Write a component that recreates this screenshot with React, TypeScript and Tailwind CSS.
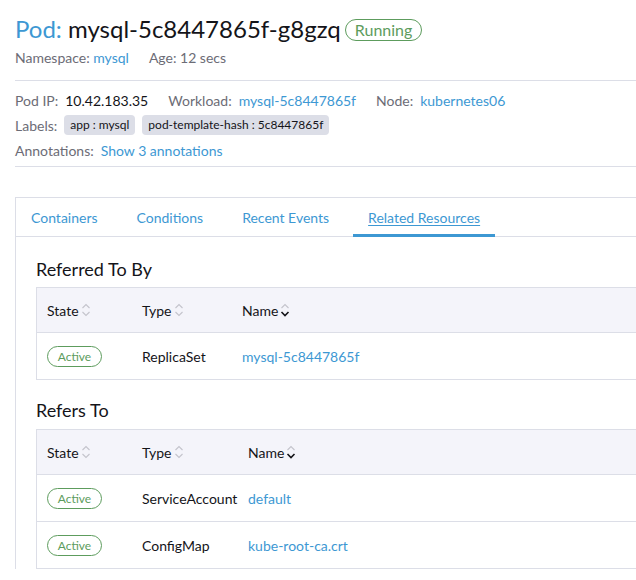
import { ReactNode } from 'react';

const SortIcon = ({ active = false }: { active?: boolean }) => (
  <svg className="ml-[2px] inline-block h-[16px] w-[10px]" viewBox="0 0 10 16" fill="none">
    <path d="M1.5 6L5 2.5L8.5 6" stroke="#c4c4cc" strokeWidth={1.1} />
    <path
      d="M1.5 10L5 13.5L8.5 10"
      stroke={active ? '#141419' : '#c4c4cc'}
      strokeWidth={active ? 1.6 : 1.1}
    />
  </svg>
);

const ActiveBadge = () => (
  <span className="inline-flex h-[21px] w-[55px] items-center justify-center rounded-full border border-[#5d9c5d] text-[12px] text-[#5d9c5d]">
    Active
  </span>
);

interface Row {
  type: string;
  name: string;
}

const ResourceTable = ({ rows, typeWidth }: { rows: Row[]; typeWidth: string }) => (
  <div className="border-y border-l border-[#dcdee7] text-[14px] text-[#141419]">
    <div className="flex h-[44px] items-center bg-[#f4f4fa] pl-[10px]">
      <div className="flex w-[95px] items-center">
        State
        <SortIcon />
      </div>
      <div className={`flex items-center ${typeWidth}`}>
        Type
        <SortIcon />
      </div>
      <div className="flex items-center">
        Name
        <SortIcon active />
      </div>
    </div>
    {rows.map((r, i) => (
      <div key={i} className="flex h-[47px] items-center border-t border-[#dcdee7] pl-[10px]">
        <div className="w-[95px]">
          <ActiveBadge />
        </div>
        <div className={typeWidth}>{r.type}</div>
        <div className="text-[#3d98d3]">{r.name}</div>
      </div>
    ))}
  </div>
);

const Field = ({ label, children }: { label: string; children: ReactNode }) => (
  <span className="mr-[20px] flex items-center">
    <span className="mr-[7px] text-[#6c6c76]">{label}</span>
    {children}
  </span>
);

const Chip = ({ children }: { children: ReactNode }) => (
  <span className="mr-[7px] flex h-[20px] items-center rounded-[4px] bg-[#dcdee7] px-[6px] text-[12px] text-[#141419]">
    {children}
  </span>
);

export default function App() {
  const tabs = ['Containers', 'Conditions', 'Recent Events', 'Related Resources'];

  return (
    <div className="h-[580px] w-[636px] overflow-hidden bg-white pl-[15px] font-['Lato',sans-serif]">
      <div className="flex items-center pt-[13px]">
        <h1 className="text-[24px] leading-[32px] text-[#141419]">
          <span className="text-[#3d98d3]">Pod:</span> mysql-5c8447865f-g8gzq
        </h1>
        <span className="ml-[4px] mt-[1px] flex h-[22px] items-center rounded-full border border-[#5d9c5d] px-[9px] text-[16px] text-[#5d9c5d]">
          Running
        </span>
      </div>
      <div className="mt-[3px] flex text-[14px] leading-[20px] text-[#6c6c76]">
        <span className="mr-[20px]">
          Namespace: <span className="text-[#3d98d3]">mysql</span>
        </span>
        <span>Age: 12 secs</span>
      </div>

      <div className="mt-[12px] border-t border-[#dcdee7]" />

      <div className="flex flex-col gap-[5px] pt-[9px] pb-[6px] text-[14px]">
        <div className="flex h-[20px] items-center">
          <Field label="Pod IP:">
            <span className="text-[#141419]">10.42.183.35</span>
          </Field>
          <Field label="Workload:">
            <span className="text-[#3d98d3]">mysql-5c8447865f</span>
          </Field>
          <Field label="Node:">
            <span className="text-[#3d98d3]">kubernetes06</span>
          </Field>
        </div>
        <div className="flex h-[20px] items-center">
          <span className="mr-[7px] text-[#6c6c76]">Labels:</span>
          <Chip>app : mysql</Chip>
          <Chip>pod-template-hash : 5c8447865f</Chip>
        </div>
        <div className="flex h-[20px] items-center">
          <span className="mr-[7px] text-[#6c6c76]">Annotations:</span>
          <span className="text-[#3d98d3]">Show 3 annotations</span>
        </div>
      </div>

      <div className="border-t border-[#dcdee7]" />

      <div className="mt-[30px] border-l border-t border-[#dcdee7]">
        <div className="flex h-[39px] gap-[9px] border-b border-[#dcdee7] text-[14px] text-[#3d98d3]">
          {tabs.map((t, i) => {
            const selected = i === tabs.length - 1;
            return (
              <div
                key={t}
                className={`flex items-center px-[15px] ${
                  selected ? '-mb-px border-b-[3px] border-[#3d98d3] pt-[3px]' : ''
                }`}
              >
                <span className={selected ? 'underline underline-offset-2' : ''}>{t}</span>
              </div>
            );
          })}
        </div>

        <div className="pl-[20px] pt-[20px]">
          <h2 className="text-[18px] leading-[24px] text-[#141419]">Referred To By</h2>
          <div className="mt-[6px]">
            <ResourceTable rows={[{ type: 'ReplicaSet', name: 'mysql-5c8447865f' }]} typeWidth="w-[100px]" />
          </div>

          <h2 className="mt-[18px] text-[18px] leading-[24px] text-[#141419]">Refers To</h2>
          <div className="mt-[7px]">
            <ResourceTable
              rows={[
                { type: 'ServiceAccount', name: 'default' },
                { type: 'ConfigMap', name: 'kube-root-ca.crt' },
              ]}
              typeWidth="w-[106px]"
            />
          </div>
        </div>
      </div>
    </div>
  );
}
